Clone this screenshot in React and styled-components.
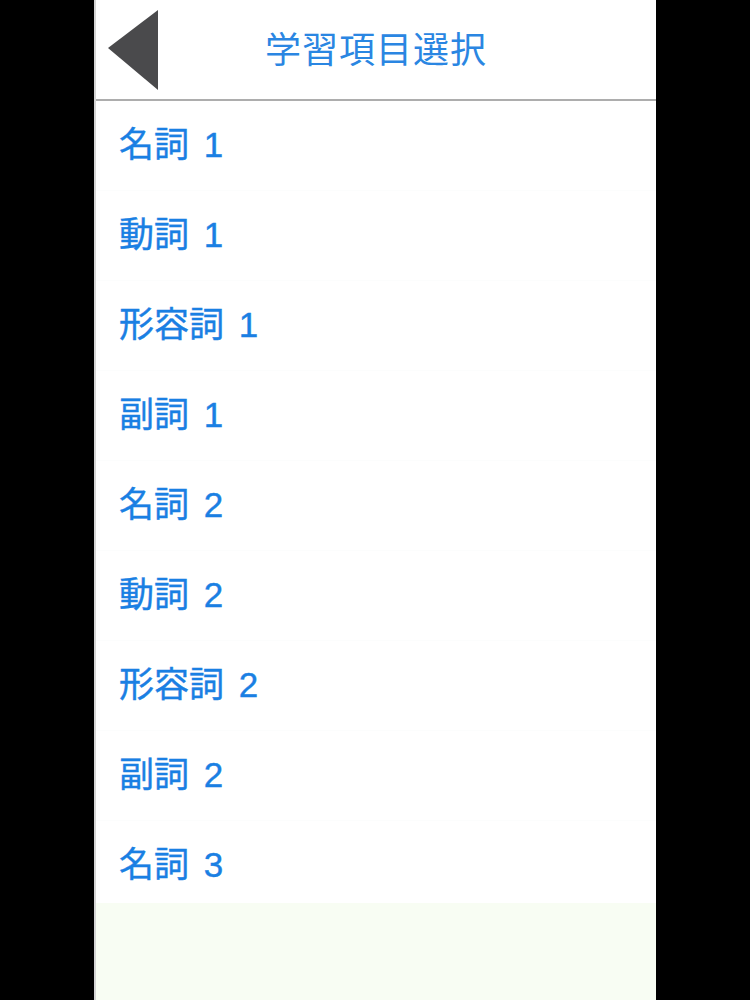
import React from 'react';
import styled, { createGlobalStyle } from 'styled-components';

const GlobalStyle = createGlobalStyle`
  html, body {
    margin: 0;
    padding: 0;
    background: #000;
  }
  body {
    font-family: "Liberation Sans", "Noto Sans CJK JP", sans-serif;
  }
`;

const items = [
  '名詞 1', '動詞 1', '形容詞 1', '副詞 1',
  '名詞 2', '動詞 2', '形容詞 2', '副詞 2',
  '名詞 3',
];

const App = () => {
  return (
    <>
      <GlobalStyle />
      <Screen>
        <Panel>
          <Header>
            <BackButton aria-label="戻る">
              <svg width="52" height="80" viewBox="0 0 52 80">
                <polygon points="50,0 50,80 0,38" fill="#4a4a4c" />
              </svg>
            </BackButton>
            <Title>学習項目選択</Title>
          </Header>
          <List>
            {items.map((label) => (
              <Row key={label}>{label}</Row>
            ))}
          </List>
          <Footer />
        </Panel>
      </Screen>
    </>
  );
};

const Screen = styled.div`
  display: flex;
  justify-content: center;
  width: 750px;
  height: 1000px;
  background: #000;
`;

const Panel = styled.div`
  display: flex;
  flex-direction: column;
  width: 562px;
  height: 1000px;
  background: #fff;
  border-left: 2px solid #d4d4d4;
  box-sizing: border-box;
`;

const Header = styled.div`
  position: relative;
  display: flex;
  align-items: center;
  justify-content: center;
  height: 101px;
  padding-bottom: 6px;
  border-bottom: 2px solid #adadad;
  box-sizing: border-box;
  flex-shrink: 0;
`;

const BackButton = styled.div`
  position: absolute;
  left: 12px;
  top: 10px;
  line-height: 0;
`;

const Title = styled.h1`
  margin: 0;
  font-size: 36px;
  font-weight: 400;
  color: #2a86e2;
  letter-spacing: 1px;
  font-family: "Noto Sans CJK JP", sans-serif;
`;

const List = styled.div`
  display: flex;
  flex-direction: column;
`;

const Row = styled.div`
  display: flex;
  align-items: center;
  height: 90px;
  box-sizing: border-box;
  padding-left: 23px;
  padding-bottom: 9px;
  font-size: 35px;
  word-spacing: 5px;
  color: #1a7fe3;
  border-bottom: 1px solid #fcfdfd;
  font-family: "Liberation Sans", "Noto Sans CJK JP", sans-serif;
  -webkit-text-stroke: 0.4px #1a7fe3;
`;

const Footer = styled.div`
  flex: 1;
  background: #f8fdf3;
  margin-top: -8px;
`;

export default App;
